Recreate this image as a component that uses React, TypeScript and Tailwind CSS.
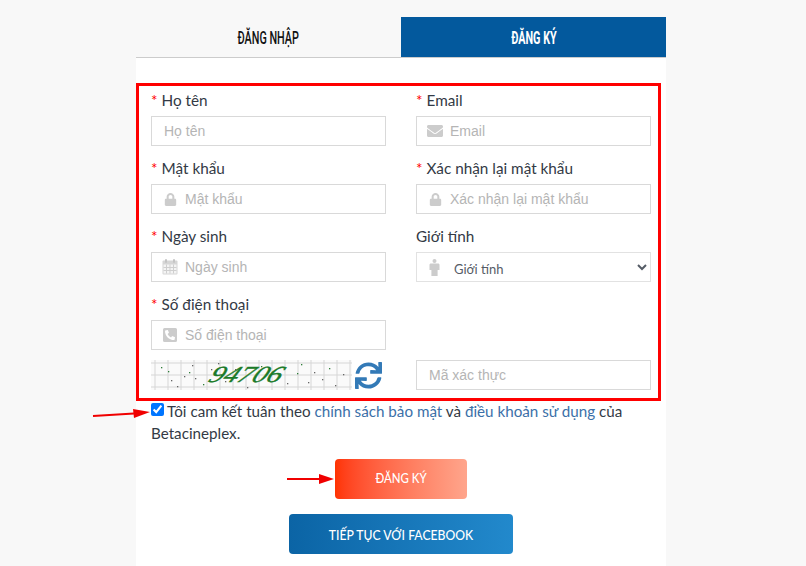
import { FaEnvelope, FaLock, FaPhoneSquareAlt, FaSync } from "react-icons/fa";
import type { ReactNode } from "react";

const dots = [
  [10, 7], [20, 20], [26, 26], [38, 12], [41, 5], [44, 18], [52, 24], [60, 9], [67, 3], [70, 15], [74, 21], [33, 16], [17, 11],
  [84, 9], [96, 27], [110, 6], [128, 16], [136, 23], [150, 4], [163, 12], [171, 19], [178, 8], [184, 25], [192, 14], [146, 13], [157, 22],
];

function Captcha() {
  const vertical = Array.from({ length: 16 }, (_, i) => 4 + i * 13);
  const horizontal = [3, 15, 27];
  return (
    <svg width="201" height="30" viewBox="0 0 201 30" className="shrink-0">
      <rect width="201" height="30" fill="#fafafa" />
      {vertical.map((x) => (
        <line key={x} x1={x} y1="0" x2={x} y2="30" stroke="#d6d6d6" strokeWidth="1" />
      ))}
      {horizontal.map((y) => (
        <line key={y} x1="0" y1={y} x2="201" y2={y} stroke="#d6d6d6" strokeWidth="1" />
      ))}
      {dots.map(([x, y], i) => (
        <rect key={i} x={x} y={y} width="1.3" height="1.3" fill={i % 3 === 0 ? "#2f7d3a" : "#666"} />
      ))}
      <text
        x="0"
        y="0"
        transform="translate(56 22) skewX(-28)"
        fill="#1a7a28"
        stroke="#1a7a28"
        strokeWidth="0.4"
        fontFamily="Liberation Serif"
        fontStyle="italic"
        fontSize="23"
        textLength="72"
        lengthAdjust="spacingAndGlyphs"
      >
        94706
      </text>
    </svg>
  );
}

function CalendarIcon() {
  return (
    <svg width="16" height="16" viewBox="0 0 16 16" fill="none">
      <rect x="0.5" y="1.5" width="15" height="14" rx="1" fill="#d6d6d6" />
      <rect x="3" y="0" width="2" height="4" rx="1" fill="#c4c4c4" />
      <rect x="11" y="0" width="2" height="4" rx="1" fill="#c4c4c4" />
      <path d="M1.5 5.5h13v9h-13z" fill="#f4f4f4" />
      <path d="M1.5 8.5h13M1.5 11.5h13M4.5 5.5v9M8 5.5v9M11.5 5.5v9" stroke="#cfcfcf" strokeWidth="1" />
    </svg>
  );
}

function MaleIcon() {
  return (
    <svg width="11" height="17" viewBox="0 0 11 17" fill="#cccccc">
      <circle cx="5.5" cy="2" r="2" />
      <path d="M1.8 4.6h7.4c.7 0 1.3.6 1.3 1.3V11H8.6v6H2.4v-6H.5V5.900c0-.7.6-1.300 1.300-1.300z" />
    </svg>
  );
}

function Label({ text, required = true }: { text: string; required?: boolean }) {
  return (
    <div className="flex h-[30px] items-center pb-[1px] text-[15.3px] text-[#333a45]">
      {required && <span className="mr-[4px] text-[#ff0000]">*</span>}
      {text}
    </div>
  );
}

function Field({
  label,
  required = true,
  placeholder,
  icon,
}: {
  label: string;
  required?: boolean;
  placeholder: string;
  icon?: ReactNode;
}) {
  return (
    <div>
      <Label text={label} required={required} />
      <div className="relative">
        {icon && (
          <span className="absolute left-[10px] top-0 flex h-[30px] w-[18px] items-center justify-center text-[#cccccc]">
            {icon}
          </span>
        )}
        <input
          placeholder={placeholder}
          className={`h-[30px] w-full border border-[#d9d9d9] bg-white pr-2 font-['Liberation_Sans',sans-serif] text-[14px] placeholder:text-[#b5b5b5] ${
            icon ? "pl-[33px]" : "pl-3"
          }`}
        />
      </div>
    </div>
  );
}

export default function App() {
  return (
    <div className="h-[566px] overflow-hidden bg-[#f8f8f8] pt-[17px] font-['Lato',sans-serif]">
      <div className="relative ml-[136px] h-[549px] w-[530px] bg-white">
        <div className="grid h-[41px] grid-cols-2 border-b border-[#cccccc] bg-[#f8f8f8] font-['Roboto',sans-serif] text-[18px] font-medium">
          <button className="flex items-center justify-center text-[#111111]">
            <span className="inline-block scale-x-[0.6]">ĐĂNG NHẬP</span>
          </button>
          <button className="flex h-[40px] items-center justify-center bg-[#03599d] font-bold text-white">
            <span className="inline-block scale-x-[0.6]">ĐĂNG KÝ</span>
          </button>
        </div>

        <div className="mt-[25px] h-[318px] w-[525px] border-[3px] border-[#ff0000] pl-[12px] pr-[7px]">
          <div className="grid grid-cols-2 gap-x-[30px] gap-y-[8px]">
            <Field label="Họ tên" placeholder="Họ tên" />
            <Field label="Email" placeholder="Email" icon={<FaEnvelope size={16} />} />
            <Field label="Mật khẩu" placeholder="Mật khẩu" icon={<FaLock size={13} />} />
            <Field label="Xác nhận lại mật khẩu" placeholder="Xác nhận lại mật khẩu" icon={<FaLock size={13} />} />
            <Field label="Ngày sinh" placeholder="Ngày sinh" icon={<CalendarIcon />} />
            <div>
              <Label text="Giới tính" required={false} />
              <div className="relative">
                <span className="absolute left-[9px] top-0 flex h-[30px] w-[18px] items-center justify-center">
                  <MaleIcon />
                </span>
                <select className="h-[30px] w-full border border-[#e2e2e2] bg-white pl-[33px] pt-[3px] text-[13px] text-[#555c66]">
                  <option>Giới tính</option>
                </select>
              </div>
            </div>
            <Field label="Số điện thoại" placeholder="Số điện thoại" icon={<FaPhoneSquareAlt size={16} />} />
            <div />
            <div className="mt-[2px] flex h-[30px] items-center">
              <Captcha />
              <FaSync size={27} className="ml-[3px] text-[#337ab7]" />
            </div>
            <input
              placeholder="Mã xác thực"
              className="mt-[2px] h-[30px] w-full border border-[#d9d9d9] pl-3 font-['Liberation_Sans',sans-serif] text-[14px] placeholder:text-[#b5b5b5]"
            />
          </div>
        </div>

        <div className="-mt-[1px] pl-[15px] pr-[30px] text-[15.2px] leading-[22px] text-[#333a45]">
          <input type="checkbox" defaultChecked className="mr-[3px] -translate-y-[1px] align-baseline" />
          Tôi cam kết tuân theo <a className="text-[#3b6fa8]">chính sách bảo mật</a> và{" "}
          <a className="text-[#3b6fa8]">điều khoản sử dụng</a> của Betacineplex.
        </div>

        <div className="mt-[15px] flex flex-col items-center gap-[15px]">
          <button className="h-[40px] w-[132px] rounded-[4px] bg-gradient-to-r from-[#ff3300] to-[#ffa58c] text-[13px] font-medium text-white">
            <span className="inline-block scale-x-[0.88]">ĐĂNG KÝ</span>
          </button>
          <button className="h-[40px] w-[224px] rounded-[4px] bg-gradient-to-r from-[#0b64a5] to-[#2289cc] text-[14px] font-medium text-white">
            <span className="inline-block scale-x-[0.87]">TIẾP TỤC VỚI FACEBOOK</span>
          </button>
        </div>

        <svg width="60" height="12" viewBox="0 0 60 12" className="absolute left-[-44px] top-[390px]">
          <path d="M1 9 L42 6.5" stroke="#f00000" strokeWidth="2" />
          <path d="M41 2 L58 5 L42 11 Z" fill="#f00000" />
        </svg>
        <svg width="50" height="12" viewBox="0 0 50 12" className="absolute left-[150px] top-[456px]">
          <path d="M1 6 L36 6" stroke="#f00000" strokeWidth="2" />
          <path d="M33 1 L48 6 L33 11 Z" fill="#f00000" />
        </svg>
      </div>
    </div>
  );
}
